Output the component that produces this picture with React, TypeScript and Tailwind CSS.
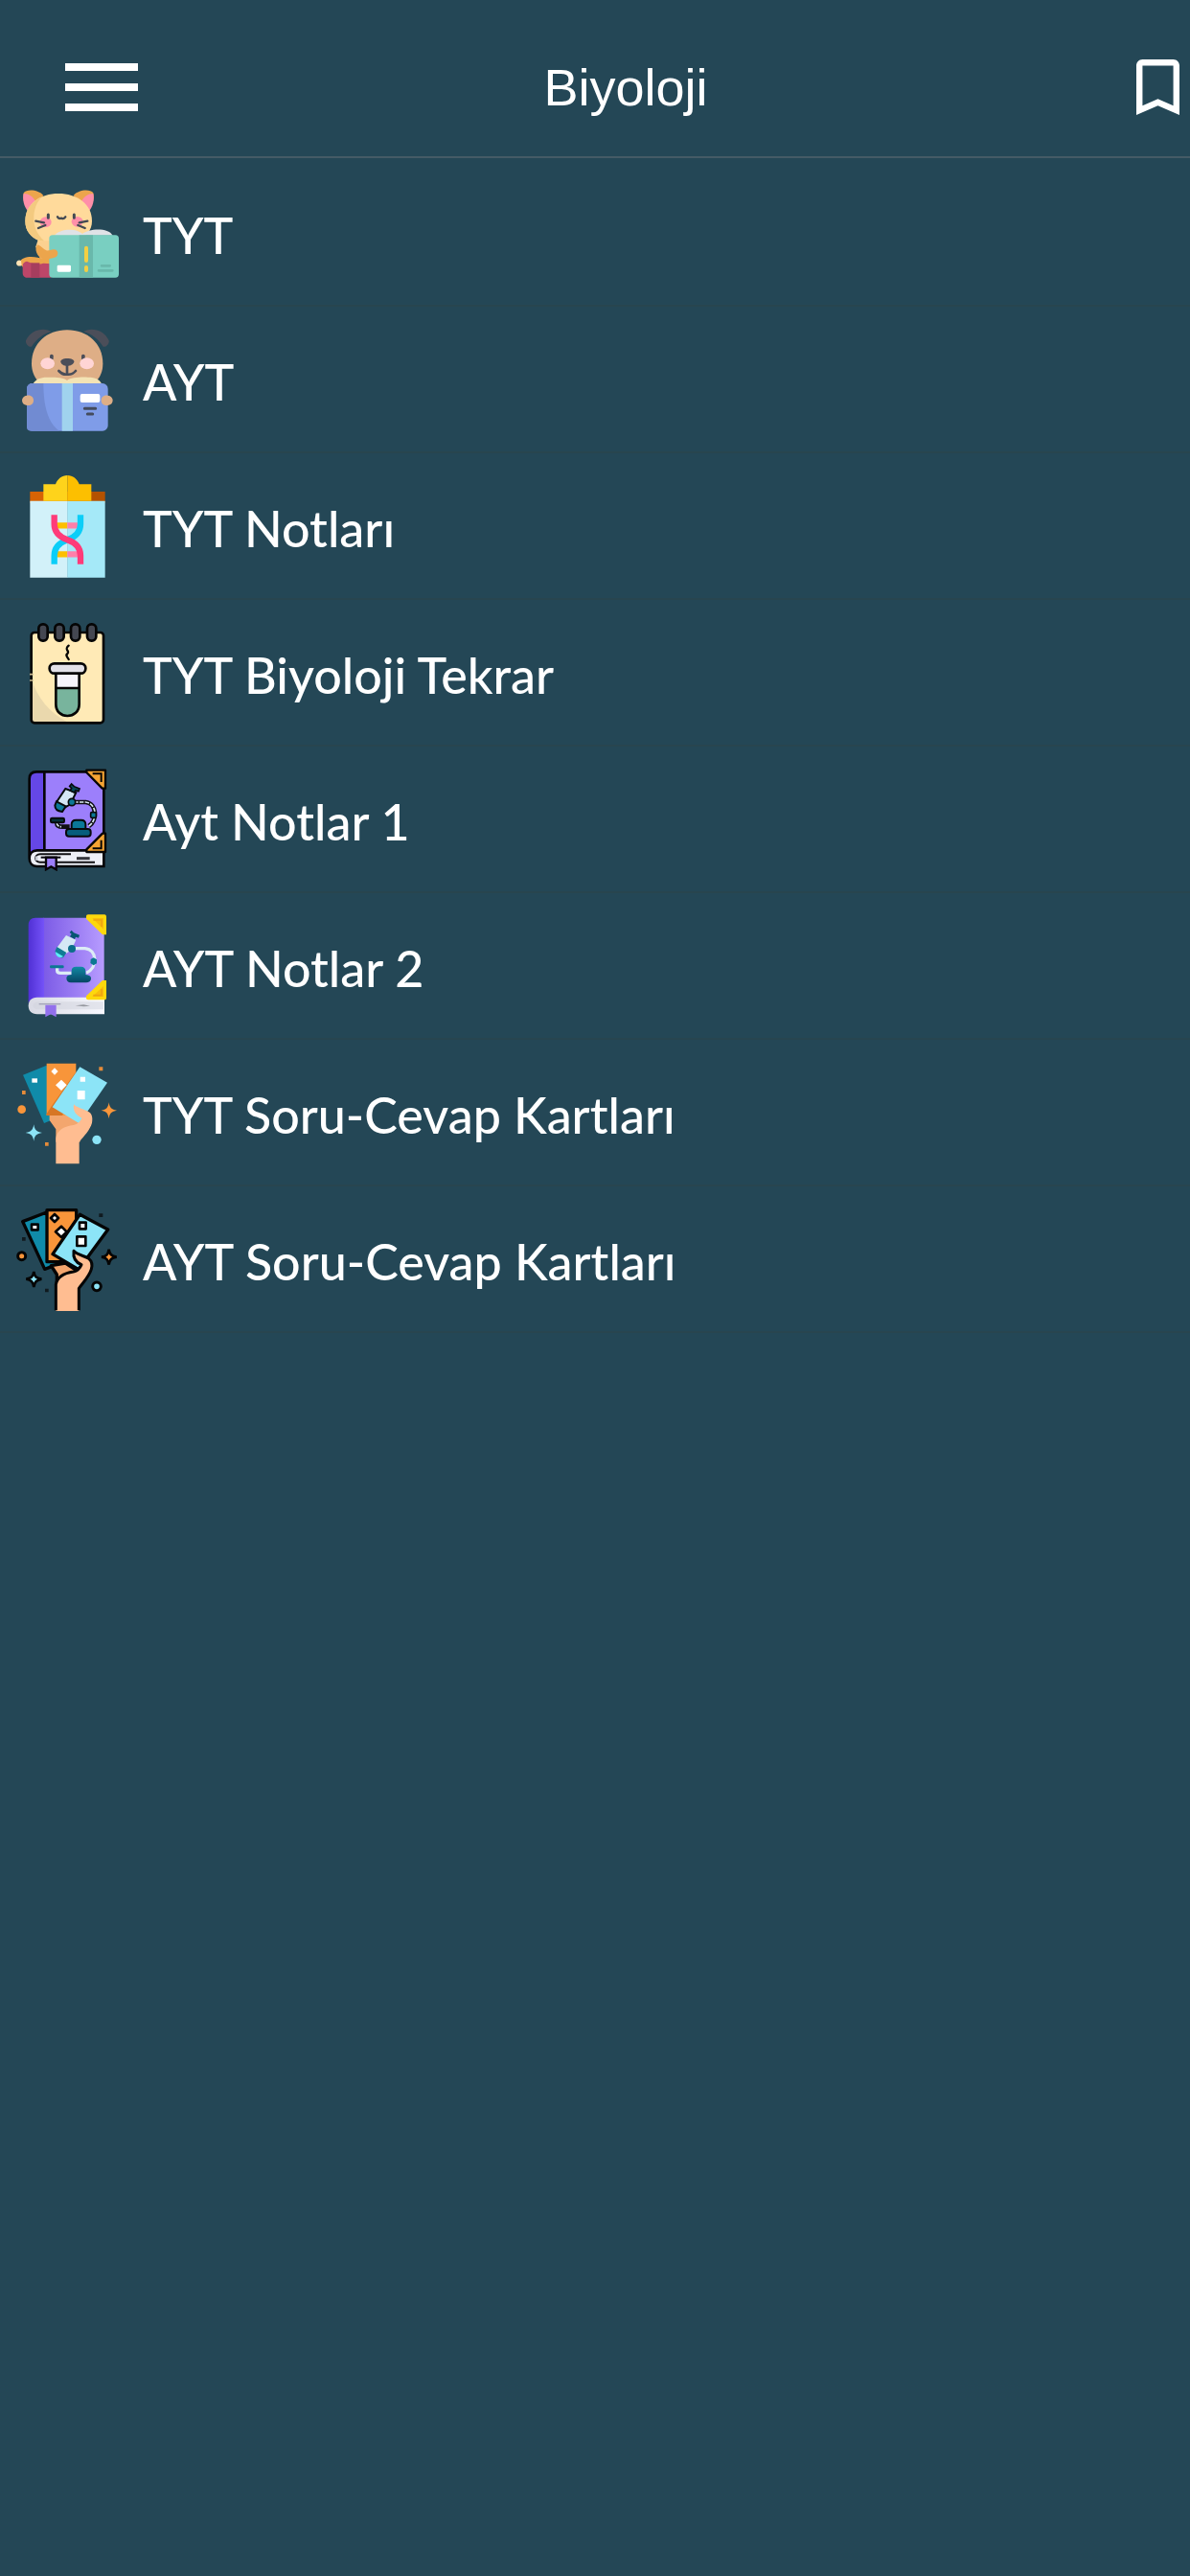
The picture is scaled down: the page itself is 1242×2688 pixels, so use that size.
import type { ReactNode } from "react"

const CatIcon = () => (
  <svg viewBox="51 27 324 324" className="size-[108px] shrink-0" aria-hidden="true">
    <path d="M120 208 L112 232 L130 282 H170 V205 Z" fill="#fcd190" />
    <path d="M60 284 C66 262 98 262 118 266 C138 271 148 262 160 272 V300 L72 296 Z" fill="#eca54c" />
    <path d="M51 284 C52 276 60 272 66 277 L68 291 C60 295 52 292 51 284 Z" fill="#ffe3b4" />
    <path d="M84 278 C98 284 116 290 136 284 L160 286 V329 H84 C76 329 71 322 71 314 V292 C71 284 77 279 84 278 Z" fill="#bd4669" />
    <path d="M97 283 H124 V329 H97 Z" fill="#a63d5e" />
    <path d="M74 64 C84 50 122 54 136 72 L96 118 C76 106 70 84 74 64 Z" fill="#eca54c" />
    <path d="M74 66 C90 66 104 76 112 92 L88 122 C74 106 70 84 74 66 Z" fill="#ff8fa9" />
    <path d="M292 64 C282 50 244 54 230 72 L270 118 C290 106 296 84 292 64 Z" fill="#eca54c" />
    <path d="M292 66 C276 66 262 76 254 92 L278 122 C292 106 296 84 292 66 Z" fill="#ff8fa9" />
    <path d="M183 66 C240 66 288 98 288 152 C288 180 270 200 246 214 H122 C96 202 79 182 79 152 C79 98 126 66 183 66 Z" fill="#ffda9b" />
    <path d="M132 76 C98 92 79 116 79 152 C79 182 96 204 126 213 L138 214 C114 190 106 170 106 144 C106 116 114 94 132 76 Z" fill="#f3ca80" />
    <ellipse cx="143" cy="155" rx="18" ry="16" fill="#ff8fa9" />
    <ellipse cx="242" cy="154" rx="18" ry="16" fill="#ff8fa9" />
    <g fill="none" stroke="#424953" strokeWidth="7" strokeLinecap="round">
      <path d="M151 132 V142 M232 132 V142" strokeWidth="9" />
      <path d="M180 139 Q183 146 192 143 Q201 147 205 139" />
      <path d="M112 152 L138 157 M120 174 L142 165 M274 152 L248 157 M266 174 L244 165" />
    </g>
    <path d="M170 197 C190 174 240 174 258 192 C276 176 338 170 353 197 Z" fill="#dfe2e6" />
    <rect x="154" y="196" width="218" height="133" rx="11" fill="#79cfc1" />
    <rect x="248" y="196" width="43" height="133" fill="#69b8ab" />
    <rect x="264" y="230" width="12" height="52" rx="6" fill="#f3cf43" />
    <rect x="264" y="291" width="12" height="21" rx="6" fill="#f3cf43" />
    <rect x="179" y="290" width="43" height="21" rx="4" fill="#fff" />
    <path d="M318 292 H344 M309 307 H352" stroke="#69b8ab" strokeWidth="8" strokeLinecap="round" />
    <path d="M118 226 C108 234 112 256 126 266 C142 276 166 268 176 264 C186 254 180 242 170 241 C160 240 152 247 145 244 C136 240 128 230 118 226 Z" fill="#eca54c" />
  </svg>
)

const DogIcon = () => (
  <svg viewBox="51 36 324 324" className="size-[108px] shrink-0" aria-hidden="true">
    <path d="M210 43 C274 43 322 86 322 148 C322 172 314 190 302 202 H118 C106 188 99 170 99 148 C99 86 146 43 210 43 Z" fill="#deae86" />
    <path d="M161 49 C142 33 96 40 81 76 C79 86 90 98 99 95 C114 72 136 54 161 49 Z" fill="#4b4e59" />
    <path d="M261 49 C280 33 326 40 341 76 C343 86 332 98 323 95 C308 72 286 54 261 49 Z" fill="#4b4e59" />
    <rect x="156" y="119" width="11" height="18" rx="5" fill="#4b4e59" />
    <rect x="255" y="119" width="11" height="18" rx="5" fill="#4b4e59" />
    <ellipse cx="149" cy="148" rx="22" ry="18" fill="#ffd5d5" />
    <ellipse cx="272" cy="148" rx="22" ry="18" fill="#ffd5d5" />
    <path d="M210 132 C224 132 232 136 232 142 C232 150 220 156 210 156 C200 156 190 150 190 142 C190 136 198 132 210 132 Z" fill="#4b4e59" />
    <path d="M210 150 V180 M184 171 Q196 184 210 182 Q226 184 237 171" fill="none" stroke="#4b4e59" strokeWidth="8" strokeLinecap="round" />
    <path d="M104 211 C112 196 130 190 150 191 C180 191 200 192 210 201 C220 192 250 190 275 191 C300 191 312 198 318 211 Z" fill="#f3e3b5" />
    <rect x="84" y="210" width="254" height="149" rx="17" fill="#7f9ce8" />
    <path d="M101 210 H136 C136 280 150 334 186 359 H96 C88 359 84 354 84 348 V227 C84 216 92 210 101 210 Z" fill="#718bd2" />
    <rect x="194" y="210" width="34" height="149" fill="#a0d3ee" />
    <rect x="251" y="243" width="62" height="27" rx="6" fill="#fff" />
    <path d="M265 289 H299 M274 306 H290" stroke="#444b5c" strokeWidth="9" strokeLinecap="round" />
    <path d="M84 248 C98 246 105 254 105 263 C105 274 96 281 84 279 C74 277 69 271 69 263 C69 255 75 249 84 248 Z" fill="#deae86" />
    <path d="M338 248 C324 246 317 254 317 263 C317 274 326 281 338 279 C348 277 353 271 353 263 C353 255 347 249 338 248 Z" fill="#deae86" />
  </svg>
)

const DnaIcon = () => (
  <svg viewBox="51 30 324 324" className="size-[108px] shrink-0" aria-hidden="true">
    <path d="M94 84 H212 V120 H94 Z" fill="#d66304" />
    <path d="M212 84 H329 V120 H212 Z" fill="#b45200" />
    <path d="M94 113 H212 V353 H94 Z" fill="#d2f1f9" />
    <path d="M211 113 H329 V353 H211 Z" fill="#a5e9f8" />
    <path d="M136 61 H174 C180 44 194 33 211 33 V113 H136 Z" fill="#fed31b" />
    <path d="M286 61 H248 C242 44 228 33 211 33 V113 H286 Z" fill="#fdbf00" />
    <path d="M175 190 H211 M175 280 H211" stroke="#fdbf00" strokeWidth="19" />
    <path d="M211 190 H248 M211 280 H248" stroke="#ff80aa" strokeWidth="19" />
    <path d="M252 157 V186 C252 212 236 226 211 235 C187 244 170 260 170 284 V311" fill="none" stroke="#0bcef8" strokeWidth="19" />
    <path d="M170 157 V186 C170 212 187 226 211 235 C236 244 252 260 252 284 V311" fill="none" stroke="#ff3b79" strokeWidth="19" />
  </svg>
)

const TubeIcon = () => (
  <svg viewBox="51 24 324 324" className="size-[108px] shrink-0" aria-hidden="true">
    <rect x="98" y="60" width="226" height="283" rx="10" fill="#ffeab6" />
    <path d="M98 204 C118 266 154 310 210 340 H108 C102 340 98 336 98 330 Z" fill="#ead8ad" />
    <rect x="98" y="60" width="226" height="283" rx="10" fill="none" stroke="#060606" strokeWidth="8" />
    <path d="M93 191 H104 M93 210 H104" stroke="#c9b88f" strokeWidth="5" />
    <g fill="#444751" stroke="#050505" strokeWidth="8">
      <rect x="121" y="34" width="28" height="52" rx="13" />
      <rect x="172" y="34" width="28" height="52" rx="13" />
      <rect x="222" y="34" width="28" height="52" rx="13" />
      <rect x="273" y="34" width="28" height="52" rx="13" />
    </g>
    <path d="M215 101 C204 110 210 113 213 120 C216 128 203 126 210 136 L215 144" fill="none" stroke="#050505" strokeWidth="7" strokeLinecap="round" />
    <path d="M175 184 H248 V234 H175 Z" fill="#f6f4fb" />
    <path d="M175 234 H248 V284 C248 308 231 321 211 321 C191 321 175 308 175 284 Z" fill="#78b49d" />
    <path d="M175 184 V284 C175 308 191 321 211 321 C231 321 248 308 248 284 V184 M175 234 H248" fill="none" stroke="#050505" strokeWidth="8" />
    <rect x="155" y="157" width="113" height="31" rx="15" fill="#e2e1e8" stroke="#050505" strokeWidth="8" />
  </svg>
)

const BookOutlineIcon = () => (
  <svg viewBox="51 33 324 324" className="size-[108px] shrink-0" aria-hidden="true">
    <path d="M92 315 V68 C92 54 100 46 114 46 H325 V300 H108 Z" fill="#9c7ffb" />
    <path d="M92 315 V68 C92 54 100 46 114 46 H139 V292 H112 C100 292 92 300 92 315 Z" fill="#6547e6" />
    <path d="M325 292 H116 C84 292 84 342 116 342 H325 Z" fill="#eef0f7" />
    <path d="M92 315 V68 C92 54 100 46 114 46 H325 V342 H116 C100 342 92 330 92 317 C92 302 101 292 116 292 H325 M139 46 V292" fill="none" stroke="#060508" strokeWidth="8" />
    <path d="M222 304 H126 C106 304 106 329 126 329 H297" fill="none" stroke="#111014" strokeWidth="6" />
    <path d="M110 317 H118" stroke="#c5c9d3" strokeWidth="13" />
    <path d="M240 317 H281" stroke="#34353b" strokeWidth="9" />
    <path d="M144 314 H176 V352 L160 343 L144 352 Z" fill="#9c7ffb" stroke="#08060c" strokeWidth="7" />
    <path d="M128 314 H190" stroke="#08060c" strokeWidth="6" />
    <path d="M271 41 H330 V98 H320 L271 48 Z" fill="#f5a433" stroke="#070605" strokeWidth="7" strokeLinejoin="round" />
    <path d="M290 52 H317 V78" fill="none" stroke="#070605" strokeWidth="6" />
    <path d="M330 239 V297 H271 V289 L321 239 Z" fill="#f5a433" stroke="#070605" strokeWidth="7" strokeLinejoin="round" />
    <path d="M290 286 H317 V260" fill="none" stroke="#070605" strokeWidth="6" />
    <path d="M232 141 H268 C304 145 306 198 278 216 M178 206 C178 214 184 218 196 218 H218" fill="none" stroke="#101013" strokeWidth="14" />
    <path d="M232 141 H268 C304 145 306 198 278 216 M178 206 C178 214 184 218 192 218" fill="none" stroke="#dcebf5" strokeWidth="5" strokeDasharray="13 4" />
    <path d="M205 99 L238 111 L220 148 L203 158 L177 141 Z" fill="#d5e6f5" stroke="#070a0c" strokeWidth="6" />
    <path d="M177 139 L206 154 L195 171 C183 170 172 164 172 151 Z" fill="#0c7897" stroke="#070a0c" strokeWidth="6" />
    <path d="M224 84 L232 92 L249 99 L246 107 L237 104 L232 111 L220 105 L224 97 L218 91 Z" fill="#084958" stroke="#070a0c" strokeWidth="5" />
    <circle cx="225" cy="141" r="11" fill="#0c7897" stroke="#070a0c" strokeWidth="5" />
    <rect x="284" y="173" width="17" height="17" rx="3" fill="#0c7897" stroke="#070a0c" strokeWidth="5" />
    <rect x="159" y="191" width="42" height="14" rx="4" fill="#06313b" stroke="#070a0c" strokeWidth="6" />
    <path d="M224 227 V211 C224 202 230 197 238 197 H254 C263 197 268 202 268 211 V227 Z" fill="#0b7898" stroke="#070a0c" strokeWidth="6" />
    <rect x="207" y="225" width="77" height="23" rx="9" fill="#075d7c" stroke="#070a0c" strokeWidth="6" />
  </svg>
)

const BookIcon = () => (
  <svg viewBox="51 42 324 324" className="size-[108px] shrink-0" aria-hidden="true">
    <defs>
      <linearGradient id="cover" x1="0" x2="1">
        <stop offset="0" stopColor="#7c5be6" />
        <stop offset="1" stopColor="#b79cff" />
      </linearGradient>
      <linearGradient id="spine" x1="0" x2="1">
        <stop offset="0" stopColor="#5030d4" />
        <stop offset="1" stopColor="#7452f8" />
      </linearGradient>
      <linearGradient id="pages" x1="0" x2="1">
        <stop offset="0" stopColor="#d9dae4" />
        <stop offset="1" stopColor="#f8f9ff" />
      </linearGradient>
      <linearGradient id="base" x1="0" x2="0" y1="0" y2="1">
        <stop offset="0" stopColor="#118ba5" />
        <stop offset="1" stopColor="#064463" />
      </linearGradient>
    </defs>
    <path d="M136 53 H326 V306 H136 Z" fill="url(#cover)" />
    <path d="M89 325 V76 C89 62 97 53 111 53 H138 V306 H110 C98 306 89 314 89 325 Z" fill="url(#spine)" />
    <path d="M327 302 H116 C98 302 89 314 89 328 C89 344 98 355 116 355 H327 Z" fill="url(#pages)" />
    <path d="M324 316 H120 C98 318 98 338 118 340 H324 Z" fill="#cfd1dc" opacity=".5" />
    <path d="M122 323 H190" stroke="#a3a4b8" strokeWidth="4" />
    <path d="M236 328 L262 325 L282 329 L262 331 Z" fill="#96989f" />
    <path d="M142 326 H176 V364 L159 355 L142 364 Z" fill="#9270ec" />
    <path d="M276 43 H327 C331 43 333 46 333 50 V106 H321 L270 56 V49 C270 45 272 43 276 43 Z" fill="#fdd80c" />
    <path d="M289 54 H324 V89 Z" fill="#f8bd0c" />
    <path d="M292 60 H318 V81" fill="none" stroke="#eda511" strokeWidth="5" />
    <path d="M276 310 H327 C331 310 333 307 333 303 V249 H321 L270 298 V304 C270 308 272 310 276 310 Z" fill="#fdd80c" />
    <path d="M289 300 H324 V267 Z" fill="#f8bd0c" />
    <path d="M292 296 H318 V276" fill="none" stroke="#eda511" strokeWidth="5" />
    <path d="M232 149 H266 C305 153 307 209 270 226 M179 208 V218 C179 223 183 226 190 226 H224" fill="none" stroke="#dcecf6" strokeWidth="10" />
    <path d="M207 108 L238 122 L224 153 L207 165 L178 147 Z" fill="#d5e8f4" />
    <path d="M178 144 L208 162 L198 178 C184 180 173 169 173 157 Z" fill="#107c95" />
    <path d="M174 160 L198 174 C190 182 173 175 174 160 Z" fill="#5eedf9" />
    <path d="M224 92 L231 100 L249 107 L246 116 L237 113 L234 120 L219 112 L224 104 L218 99 Z" fill="#075672" />
    <circle cx="225" cy="150" r="12" fill="#0b6e89" />
    <path d="M284 183 L293 178 L303 184 L303 196 L293 202 L283 195 Z" fill="#0b7793" />
    <rect x="156" y="202" width="44" height="9" rx="4" fill="#0b7793" />
    <path d="M208 242 C208 235 214 232 224 231 V218 C224 210 230 206 238 206 H254 C262 206 268 211 268 219 V231 C280 232 286 236 285 244 C285 252 278 256 270 256 H222 C213 256 208 250 208 242 Z" fill="url(#base)" />
  </svg>
)

const CardsIcon = () => (
  <svg viewBox="51 36 324 324" className="size-[108px] shrink-0" aria-hidden="true">
    <path d="M72 80 L146 50 L190 210 L138 231 Z" fill="#108ba9" />
    <path d="M155 202 H250 V290 H175 V250 L155 222 Z" fill="#f3a66e" />
    <path d="M146 44 H238 V207 H146 Z" fill="#f8953a" />
    <path d="M238 70 V110 L195 207 H146 V202 L160 180 Z" fill="#d77625" />
    <path d="M171 58 L182 69 L171 80 L160 69 Z M192 95 L209 112 L192 129 L174 112 Z" fill="#fff" />
    <rect x="100" y="91" width="17" height="13" fill="#fff" />
    <path d="M250 55 L336 104 L248 232 L164 181 Z" fill="#8ce4f7" />
    <path d="M251 86 H267 V101 H251 Z M242 129 H266 V157 H242 Z" fill="#fff" />
    <path d="M175 358 V278 C178 252 202 241 230 237 C244 234 252 224 256 215 C239 208 227 193 231 172 C242 184 266 188 278 196 C288 202 291 214 288 230 C282 252 263 271 248 290 V358 Z" fill="#ffbd91" />
    <path d="M106 235 C108 252 114 258 132 261 C114 264 108 270 106 287 C103 270 98 264 80 261 C98 258 103 252 106 235 Z" fill="#8ce4f7" />
    <path d="M341 166 C343 183 349 188 366 191 C349 194 343 200 341 217 C338 200 334 194 317 191 C334 188 338 183 341 166 Z" fill="#f8953a" />
    <circle cx="68" cy="188" r="13" fill="#f8953a" />
    <circle cx="303" cy="283" r="14" fill="#8ce4f7" />
    <path d="M69 129 H80 V141 H69 Z M310 55 H322 V67 H310 Z M141 291 H152 V302 H141 Z" fill="#e58b39" />
  </svg>
)

const CardsOutlineIcon = () => (
  <svg viewBox="51 30 324 324" className="size-[108px] shrink-0" aria-hidden="true">
    <g stroke="#050505" strokeWidth="10" strokeLinejoin="round">
      <path d="M71 74 L146 45 L190 204 L140 223 Z" fill="#108ba9" />
      <path d="M160 212 L205 204 L244 230 L178 266 V240 Z" fill="#f3a66e" />
      <path d="M147 38 H239 V200 H147 Z" fill="#f8953a" />
      <path d="M171 51 L183 63 L171 75 L159 63 Z M192 89 L209 106 L192 123 L174 106 Z" fill="#fff" strokeWidth="8" />
      <rect x="99" y="83" width="20" height="17" fill="#fff" strokeWidth="8" />
      <path d="M250 52 L338 99 L246 224 L165 176 Z" fill="#8ce4f7" />
      <path d="M249 77 H269 V97 H249 Z M241 121 H268 V150 H241 Z" fill="#fff" strokeWidth="8" />
    </g>
    <path d="M175 354 V271 C179 246 203 235 230 231 C243 228 251 219 255 209 C238 202 228 188 231 166 C244 180 266 181 278 190 C288 198 290 209 286 223 C279 246 261 264 247 283 V354 Z" fill="#ffbd91" />
    <path d="M175 352 V271 C179 246 203 235 230 231 C243 228 251 219 255 209 C238 202 228 188 231 166 C244 180 266 181 278 190 C288 198 290 209 286 223 C279 246 261 264 247 283 V352" fill="none" stroke="#050505" strokeWidth="9" strokeLinejoin="round" />
    <path d="M106 231 C108 247 114 251 130 254 C114 257 108 263 106 279 C103 263 98 257 82 254 C98 251 103 247 106 231 Z" fill="#8ce4f7" stroke="#050505" strokeWidth="8" />
    <path d="M341 161 C343 177 349 182 365 185 C349 188 343 193 341 209 C338 193 334 188 318 185 C334 182 338 177 341 161 Z" fill="#f8953a" stroke="#050505" strokeWidth="8" />
    <circle cx="68" cy="182" r="12" fill="#f8953a" stroke="#050505" strokeWidth="9" />
    <circle cx="303" cy="277" r="13" fill="#8ce4f7" stroke="#050505" strokeWidth="9" />
    <path d="M69 123 H80 V134 H69 Z M310 49 H322 V60 H310 Z M141 284 H152 V295 H141 Z" fill="#101a1f" />
  </svg>
)

type Topic = {
  title: string
  icon: ReactNode
}

const topics: Topic[] = [
  { title: "TYT", icon: <CatIcon /> },
  { title: "AYT", icon: <DogIcon /> },
  { title: "TYT Notları", icon: <DnaIcon /> },
  { title: "TYT Biyoloji Tekrar", icon: <TubeIcon /> },
  { title: "Ayt Notlar 1", icon: <BookOutlineIcon /> },
  { title: "AYT Notlar 2", icon: <BookIcon /> },
  { title: "TYT Soru-Cevap Kartları", icon: <CardsIcon /> },
  { title: "AYT Soru-Cevap Kartları", icon: <CardsOutlineIcon /> },
]

const Header = () => (
  <header className="flex h-[165px] items-center border-b-2 border-[#455b66] pt-[18px] pr-[11px] pl-17">
    <button type="button" aria-label="Menü" className="flex w-19 shrink-0 flex-col gap-[13px]">
      <span className="h-2 w-full bg-white" />
      <span className="h-2 w-full bg-white" />
      <span className="h-2 w-full bg-white" />
    </button>
    <h1 className="flex-1 pr-6 text-center font-['Liberation_Sans',sans-serif] text-[54px] leading-[64px]">Biyoloji</h1>
    <button type="button" aria-label="Kaydedilenler" className="shrink-0">
      <svg viewBox="5 3 14 18" className="h-[58px] w-[45px]" fill="currentColor" aria-hidden="true">
        <path d="M17 3H7c-1.1 0-2 .9-2 2v16l7-3 7 3V5c0-1.1-.9-2-2-2zm0 15l-5-2.2L7 18V5h10v13z" />
      </svg>
    </button>
  </header>
)

const App = () => {
  return (
    <div className="min-h-screen bg-[#244756] text-white">
      <Header />
      <ul className="pt-0.5">
        {topics.map((topic) => (
          <li key={topic.title} className="border-b-2 border-[#28454f]">
            <a href="#" className="flex h-[151px] items-center gap-6 pl-[17px]">
              {topic.icon}
              <span className="pt-1 font-['Lato',sans-serif] text-[52px] leading-[64px] font-medium">{topic.title}</span>
            </a>
          </li>
        ))}
      </ul>
    </div>
  )
}

export default App
